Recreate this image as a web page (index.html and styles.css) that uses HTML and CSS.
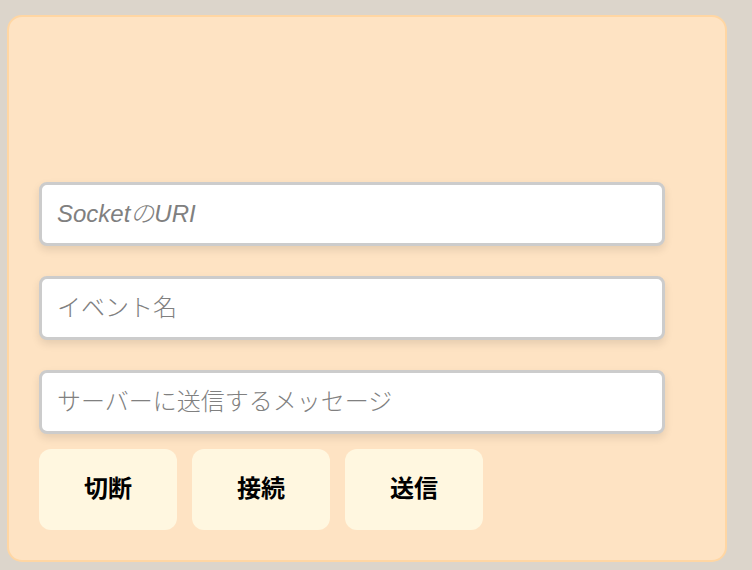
FILE: index.html
```html
<!DOCTYPE html>
<html lang="ja">
<head>
<meta charset="utf-8">
<meta name="viewport" content="width=device-width, initial-scale=1">
<title>Socket</title>
<link rel="stylesheet" href="styles.css">
</head>
<body>
<form class="panel">
  <div class="fields">
    <input class="field field-uri" type="text" placeholder="SocketのURI" aria-label="SocketのURI">
    <input class="field" type="text" placeholder="イベント名" aria-label="イベント名">
    <input class="field" type="text" placeholder="サーバーに送信するメッセージ" aria-label="サーバーに送信するメッセージ">
  </div>
  <div class="actions">
    <button class="action" type="button">切断</button>
    <button class="action" type="button">接続</button>
    <button class="action" type="button">送信</button>
  </div>
</form>
</body>
</html>
```
FILE: styles.css
```css
* {
  box-sizing: border-box;
}

body {
  margin: 0;
  padding: 15px 25px 8px 7px;
  background: #dcd5cb;
  font-family: "Liberation Sans", "Noto Sans CJK JP", sans-serif;
  font-size: 24px;
}

.panel {
  padding: 165px 30px 30px;
  border: 2px solid #ffd6a3;
  border-radius: 15px;
  background: #fee3c3;
}

.fields {
  display: grid;
  gap: 30px;
  margin-right: 30px;
}

.field {
  width: 100%;
  height: 64px;
  padding: 0 15px;
  border: 3px solid #ccc;
  border-radius: 8px;
  background: #fff;
  box-shadow: 0 4px 8px rgba(0, 0, 0, 0.1);
  font: inherit;
  font-weight: 300;
}

.field-uri {
  font-style: italic;
}

.field::placeholder {
  color: #808080;
  opacity: 1;
}

.actions {
  display: flex;
  flex-wrap: wrap;
  gap: 15px;
  margin-top: 15px;
}

.action {
  padding: 20px 45px 22px;
  border: 0;
  border-radius: 12px;
  background: #fff7e0;
  color: #000;
  font: inherit;
  font-weight: 700;
  line-height: 39px;
}
```
